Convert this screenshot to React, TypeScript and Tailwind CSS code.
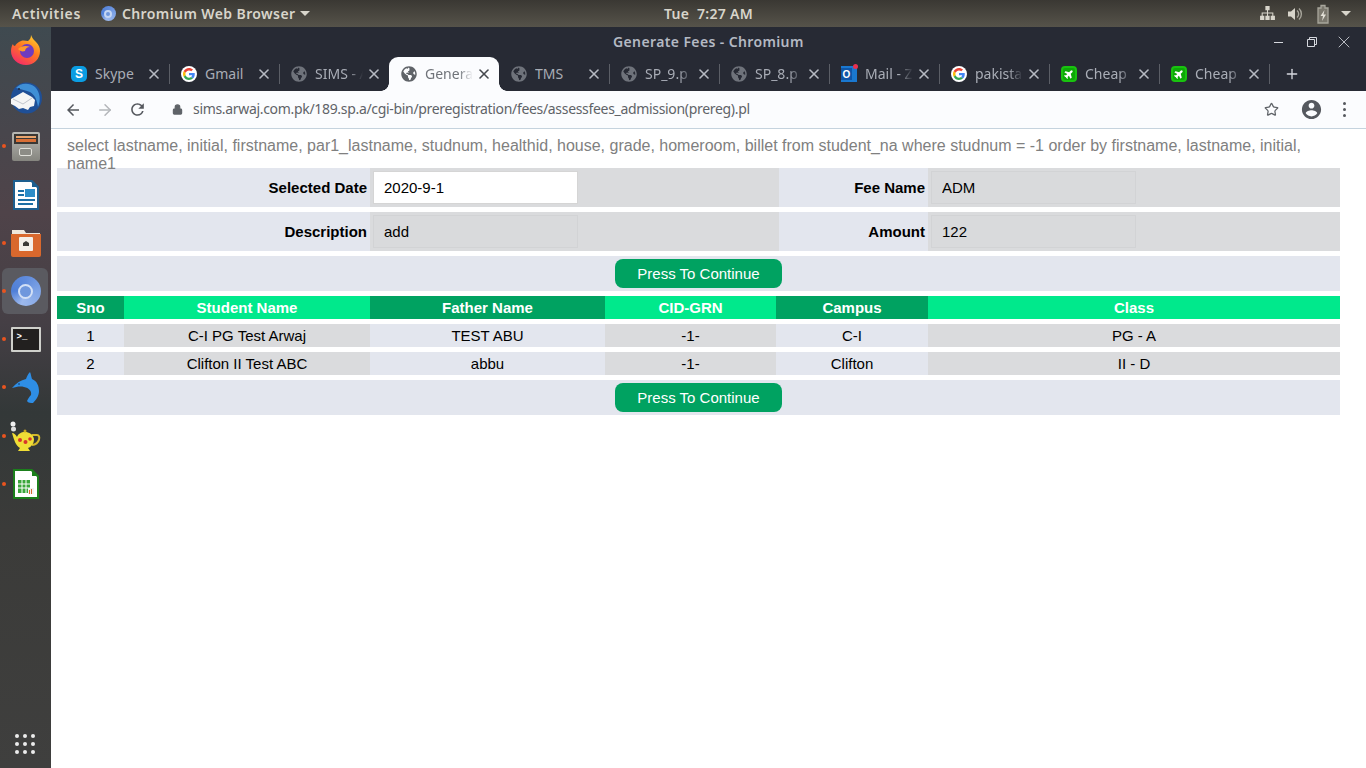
import { ArrowRight, Lock, Plus, Star, X } from "lucide-react";
import type { ReactNode } from "react";
import { FaGlobeAmericas, FaPlane } from "react-icons/fa";

const uiFont = "font-['Noto_Sans',sans-serif]";

function GoogleIcon() {
  return (
    <span className="flex h-4 w-4 items-center justify-center rounded-full bg-white">
      <svg viewBox="0 0 48 48" className="h-3 w-3">
        <path fill="#EA4335" d="M24 9.5c3.5 0 6.700 1.200 9.200 3.600l6.900-6.900C35.900 2.400 30.500 0 24 0 14.600 0 6.500 5.400 2.600 13.200l8 6.200C12.500 13.600 17.800 9.500 24 9.500z" />
        <path fill="#4285F4" d="M47 24.500c0-1.600-.1-3.100-.4-4.500H24v9h12.900c-.6 3-2.200 5.500-4.700 7.200l7.700 6c4.500-4.200 7.100-10.300 7.100-17.700z" />
        <path fill="#FBBC05" d="M10.500 28.600c-.5-1.500-.8-3-.8-4.600s.3-3.100.8-4.600l-8-6.200C.9 16.500 0 20.100 0 24s.9 7.500 2.600 10.800l7.900-6.200z" />
        <path fill="#34A853" d="M24 48c6.500 0 11.900-2.100 15.900-5.800l-7.700-6c-2.200 1.400-4.900 2.300-8.200 2.300-6.200 0-11.500-4.100-13.400-9.900l-8 6.200C6.500 42.600 14.600 48 24 48z" />
      </svg>
    </span>
  );
}

function SkypeIcon() {
  return (
    <span className="flex h-4 w-4 items-center justify-center rounded-[5px] bg-[#0b9de3] font-['Liberation_Sans',sans-serif] text-[12px] font-bold text-white">
      S
    </span>
  );
}

function GlobeIcon({ active }: { active?: boolean }) {
  return <FaGlobeAmericas className={active ? "h-4 w-4 text-[#5f6368]" : "h-4 w-4 text-[#6f737b]"} />;
}

function OutlookIcon() {
  return (
    <span className="relative flex h-4 w-4 items-center bg-[#1a78d0]">
      <span className="flex h-3 w-[11px] items-center justify-center bg-[#0f56a8] font-['Liberation_Sans',sans-serif] text-[10px] font-bold text-white">
        O
      </span>
      <span className="absolute -right-px -top-[2px] h-[5px] w-[5px] rounded-full bg-[#e8314f]" />
    </span>
  );
}

function PlaneIcon() {
  return (
    <span className="flex h-4 w-4 items-center justify-center rounded-[4px] border-2 border-[#19c20f] bg-[#0ca806]">
      <FaPlane className="h-[10px] w-[10px] -rotate-45 text-white" />
    </span>
  );
}

const tabs: { title: string; icon: ReactNode; active?: boolean; fade?: boolean; noLine?: boolean }[] = [
  { title: "Skype", icon: <SkypeIcon /> },
  { title: "Gmail", icon: <GoogleIcon /> },
  { title: "SIMS - A", icon: <GlobeIcon />, fade: true, noLine: true },
  { title: "Genera", icon: <GlobeIcon active />, active: true, fade: true, noLine: true },
  { title: "TMS", icon: <GlobeIcon /> },
  { title: "SP_9.p", icon: <GlobeIcon />, fade: true },
  { title: "SP_8.p", icon: <GlobeIcon />, fade: true },
  { title: "Mail - Z", icon: <OutlookIcon />, fade: true },
  { title: "pakista", icon: <GoogleIcon />, fade: true },
  { title: "Cheap", icon: <PlaneIcon />, fade: true },
  { title: "Cheap", icon: <PlaneIcon />, fade: true },
];

function TabItem({ title, icon, active, fade, noLine }: { title: string; icon: ReactNode; active?: boolean; fade?: boolean; noLine?: boolean }) {
  return (
    <div
      className={
        active
          ? "relative flex h-[34px] w-[110px] shrink-0 items-center rounded-t-[9px] bg-[#fbfcfe] pl-3"
          : "relative flex h-[34px] w-[110px] shrink-0 items-center pl-3"
      }
    >
      {active && <span className="absolute -left-2 bottom-0 h-2 w-2 bg-[radial-gradient(circle_at_0_0,transparent_7.5px,#fbfcfe_8px)]" />}
      {active && <span className="absolute -right-2 bottom-0 h-2 w-2 bg-[radial-gradient(circle_at_100%_0,transparent_7.5px,#fbfcfe_8px)]" />}
      <span className="flex h-4 w-4 shrink-0 items-center justify-center">{icon}</span>
      <span
        className={
          (active ? "text-[#70747a] " : "text-[#a9adb6] ") +
          "mb-[2px] ml-2 w-[48px] overflow-hidden whitespace-nowrap text-[14px] " +
          (fade ? "[mask-image:linear-gradient(to_right,black_70%,transparent_100%)]" : "")
        }
      >
        {title}
      </span>
      <X className={active ? "ml-[3px] h-4 w-4 text-[#45484e]" : "ml-[3px] h-4 w-4 text-[#b6bac2]"} strokeWidth={2.4} />
      {!noLine && <span className="absolute -right-px top-[7px] h-5 w-px bg-[#5b5e66]" />}
    </div>
  );
}

function ChromiumBall({ size }: { size: "sm" | "lg" }) {
  return (
    <span
      className={
        size === "sm"
          ? "flex h-[15px] w-[15px] items-center justify-center rounded-full bg-[conic-gradient(#5f8bdc_0deg,#7fa4e6_90deg,#9db9ec_200deg,#4f7fd8_270deg,#5f8bdc_360deg)]"
          : "flex h-[30px] w-[30px] items-center justify-center rounded-full bg-[conic-gradient(#5f8bdc_0deg,#7fa4e6_90deg,#9db9ec_200deg,#4f7fd8_270deg,#5f8bdc_360deg)]"
      }
    >
      <span
        className={
          size === "sm"
            ? "h-[8px] w-[8px] rounded-full border-2 border-[#c4d6f3] bg-[#6f97dd]"
            : "h-[15px] w-[15px] rounded-full border-2 border-[#d3e0f6] bg-[#6f97dd]"
        }
      />
    </span>
  );
}

function TopBar() {
  return (
    <div className={uiFont + " flex h-[27px] shrink-0 items-center justify-between bg-[linear-gradient(to_bottom,#3a3833,#56534a)] text-[14px] font-semibold text-[#d8d5cb]"}>
      <div className="flex flex-1 items-center">
        <span className="ml-3 tracking-[0.65px]">Activities</span>
        <span className="ml-[20px] flex">
          <ChromiumBall size="sm" />
        </span>
        <span className="ml-[6px] tracking-[0.4px]">Chromium Web Browser</span>
        <span className="ml-[4px] h-0 w-0 border-x-[5px] border-t-[5px] border-x-transparent border-t-[#d8d5cb]" />
      </div>
      <span className="whitespace-pre pl-[66px] tracking-[0.3px]">Tue  7:27 AM</span>
      <div className="flex flex-1 items-center justify-end pr-[15px]">
        <svg viewBox="0 0 16 16" className="h-[17px] w-[17px] fill-[#d8d5cb]">
          <path d="M6 1h4v4H8.500v2H13.500v3H15v4h-4v-4h1.500V8h-4v2H10v4H6v-4h1.500V8h-4v2H5v4H1v-4h1.500V7H7.500V5H6z" />
        </svg>
        <svg viewBox="0 0 16 16" className="ml-[11px] h-4 w-4">
          <path d="M1 5.500h3L8 2v12l-4-3.500H1z" fill="#d8d5cb" />
          <path d="M10 4.500a4.500 4.500 0 0 1 0 7M12 2.500a7.500 7.500 0 0 1 0 11" fill="none" stroke="#a8a69c" strokeWidth="1.400" />
        </svg>
        <svg viewBox="0 0 16 20" className="ml-[12px] h-[20px] w-4">
          <path d="M3 4h3V1.500h4V4h3v15H3z" fill="#7b786e" stroke="#a8a69c" strokeWidth="1.300" />
          <path d="M9.500 6 5.500 12h2.500L7 17l4-6.500H8.500z" fill="#e4e1d8" />
        </svg>
        <span className="ml-[10px] h-0 w-0 border-x-[5px] border-t-[5px] border-x-transparent border-t-[#d8d5cb]" />
      </div>
    </div>
  );
}

function Firefox() {
  return (
    <svg viewBox="0 0 32 32" className="h-8 w-8">
      <defs>
        <linearGradient id="ff" x1="0.8" y1="0" x2="0.2" y2="1">
          <stop offset="0" stopColor="#ffcf2e" />
          <stop offset="0.45" stopColor="#ff7a1f" />
          <stop offset="1" stopColor="#f5256e" />
        </linearGradient>
      </defs>
      <path d="M21 1c1 3 3 5 5 7 3 3 4 6 4 9 0 8-6 14-14 14S1 25 1 17c0-3 1-6 2-7 0 1 1 2 2 2 1-2 3-4 6-5 3-1 5 0 7 0 2-2 3-3 3-6z" fill="url(#ff)" />
      <circle cx="17" cy="17" r="7" fill="#6e3bc0" />
      <path d="M8 15c3-3 8-4 12-2-3 0-5 2-5 4-3 1-5 0-7-2z" fill="#ff9a2a" />
    </svg>
  );
}

function Thunderbird() {
  return (
    <svg viewBox="0 0 32 32" className="h-8 w-8">
      <circle cx="16.500" cy="16" r="15.500" fill="#1f4f96" />
      <path d="M6 6c4-5 13-6 19-1 5 5 6 13 3 20-1-7-3-12-8-15-5-2-10-3-14-4z" fill="#3f8fd6" />
      <path d="M1 17 13 10l9 5 3 3-1 6-4 1-2 3-5-2-4 1-4-3-4-2z" fill="#f5f5f5" />
      <path d="M3 17l10 5 9-6" fill="none" stroke="#c2c5cc" strokeWidth="1" />
      <circle cx="9" cy="7" r="1" fill="#1b2a44" />
    </svg>
  );
}

function FileCabinet() {
  return (
    <span className="flex h-[29px] w-[28px] flex-col rounded-[2px] bg-[linear-gradient(to_bottom,#b9b9b4,#85857f)] px-[2px] pt-[2px]">
      <span className="flex h-[10px] flex-col justify-start gap-px bg-[#3a3835] px-[2px] pt-[2px]">
        <span className="h-[2px] bg-[#e9a56e]" />
        <span className="h-[3px] bg-[#d96f36]" />
      </span>
      <span className="mx-auto mt-[4px] h-[8px] w-[13px] rounded-[2px] border border-[#e0e0da] bg-[#8c8c86]" />
    </span>
  );
}

function Writer() {
  return (
    <svg viewBox="0 0 28 32" className="h-8 w-7">
      <path d="M1 1h19l7 7v23H1z" fill="#1d5f8f" />
      <path d="M3 3h16l6 6v20H3z" fill="#fff" />
      <path d="M20 1l7 7h-7z" fill="#1d5f8f" />
      <path d="M6 11h6v2H6zM6 15h6v2H6zM6 20h17v2H6zM6 24h15v2H6z" fill="#1d6fa5" />
      <path d="M13 10h10v8H13z" fill="#2d8dc8" />
    </svg>
  );
}

function Folder() {
  return (
    <svg viewBox="0 0 30 28" className="h-[28px] w-[30px]">
      <path d="M1 1h12l2 3h14v4H1z" fill="#efe7dc" />
      <path d="M0 5h30v21a2 2 0 0 1-2 2H2a2 2 0 0 1-2-2z" fill="#d9682d" />
      <rect x="8" y="8" width="14" height="14" rx="1" fill="#f4efe8" />
      <path d="M12 17v-3l3-2 3 2v3z" fill="#3c3a36" />
    </svg>
  );
}

function Terminal() {
  return (
    <span className="flex h-[25px] w-[30px] flex-col rounded-[1px] border-2 border-[#cfd0cb] bg-[#22201f] pl-[4px] pt-[3px] font-['Liberation_Mono',monospace] text-[9px] font-bold leading-[10px] text-white">
      &gt;_
    </span>
  );
}

function Dolphin() {
  return (
    <svg viewBox="0 0 28 32" className="h-8 w-7">
      <path d="M0 17C4 12 9 9 14 8c1-3 2-5 4-7 1 2 1 4 2 7 5 2 7 7 7 12s-3 9-6 12c-2 0-5 0-6-2 1-2 2-4 4-6 1-4-2-7-7-8-4-1-8 0-12 1z" fill="#2e8ee6" />
      <circle cx="7" cy="13" r="0.800" fill="#11365e" />
    </svg>
  );
}

function Teapot() {
  return (
    <svg viewBox="0 0 32 32" className="h-8 w-8">
      <circle cx="3" cy="4" r="2.500" fill="#f0f0f0" />
      <circle cx="3.500" cy="9" r="2.500" fill="#dedede" />
      <path d="M22 15h5c4 0 3 9-5 10" fill="none" stroke="#d4b82a" strokeWidth="2" />
      <path d="M2 13c2 0 4 2 5 4 1-3 4-5 8-5s8 2 9 7c0 5-3 8-6 9l2 3H8l2-3c-4-2-6-8-8-15z" fill="#f0de36" />
      <circle cx="10" cy="20" r="2" fill="#d8342b" />
      <circle cx="15.500" cy="22" r="2" fill="#d8342b" />
      <circle cx="20" cy="19" r="1.800" fill="#d8342b" />
      <circle cx="15" cy="11" r="1.500" fill="#c9a81f" />
    </svg>
  );
}

function Calc() {
  return (
    <svg viewBox="0 0 28 32" className="h-8 w-7">
      <path d="M1 1h19l7 7v23H1z" fill="#1b7f1b" />
      <path d="M3 3h16l6 6v20H3z" fill="#fff" />
      <path d="M20 1l7 7h-7z" fill="#1b7f1b" />
      <path d="M6 12h12v13H6z" fill="#3aa63a" />
      <path d="M6 16h12M6 20h12M10 12v13M14 12v13" stroke="#fff" strokeWidth="1" />
      <path d="M16 20h6v6h-6z" fill="#f2f2f2" />
      <path d="M17 22h1v4h-1zM19 21h1v5h-1z" fill="#d9682d" />
    </svg>
  );
}

const dockItems: { icon: ReactNode; running?: boolean; active?: boolean }[] = [
  { icon: <Firefox /> },
  { icon: <Thunderbird /> },
  { icon: <FileCabinet />, running: true },
  { icon: <Writer /> },
  { icon: <Folder />, running: true },
  { icon: <ChromiumBall size="lg" />, running: true, active: true },
  { icon: <Terminal />, running: true },
  { icon: <Dolphin />, running: true },
  { icon: <Teapot />, running: true },
  { icon: <Calc />, running: true },
];

function Dock() {
  return (
    <aside className="flex w-[51px] shrink-0 flex-col justify-between bg-[linear-gradient(to_bottom,#3f4a50_0%,#4f4349_25%,#453f45_40%,#333838_52%,#3b3b39_68%,#3f3f3e_100%)]">
      <div className="-mt-px flex flex-col">
        {dockItems.map((item, i) => (
          <div key={i} className="relative flex h-[48.2px] items-center justify-center">
            {item.active && <span className="absolute left-[2px] top-px h-[46px] w-[46px] rounded-[6px] bg-[#5a5a60]" />}
            {item.running && <span className="absolute left-[2px] top-[22px] h-[4px] w-[4px] rounded-full bg-[#e9541f]" />}
            <span className="relative flex items-center justify-center">{item.icon}</span>
          </div>
        ))}
      </div>
      <div className="mb-[14px] ml-[15px] grid w-[20px] grid-cols-3 gap-[4px]">
        {Array.from({ length: 9 }).map((_, i) => (
          <span key={i} className="h-[4px] w-[4px] rounded-full bg-[#ececec]" />
        ))}
      </div>
    </aside>
  );
}

function BrowserChrome() {
  return (
    <>
      <div className={uiFont + " flex h-[64px] shrink-0 flex-col bg-[#272a34]"}>
        <div className="flex h-[30px] items-center">
          <span className="mb-[2px] ml-[562px] w-[190px] whitespace-nowrap text-center text-[14px] font-semibold tracking-[0.38px] text-[#b4b9c3]">Generate Fees - Chromium</span>
          <div className="ml-auto flex items-center pr-[12px] text-[#d6d8de]">
            <span className="h-px w-[9px] bg-[#d6d8de]" />
            <svg viewBox="0 0 10 10" className="ml-[24px] h-[10px] w-[10px] fill-none stroke-[#d6d8de]">
              <path d="M.5 2.500h7v7h-7zM2.500 2.500v-2h7v7h-2" />
            </svg>
            <X className="ml-[17px] h-5 w-5" strokeWidth={1} />
          </div>
        </div>
        <div className="flex h-[34px] pl-2">
          {tabs.map((tab, i) => (
            <TabItem key={i} title={tab.title} icon={tab.icon} active={tab.active} fade={tab.fade} noLine={tab.noLine} />
          ))}
          <Plus className="ml-[15px] mt-[9px] h-4 w-4 text-[#d6d8de]" strokeWidth={2} />
        </div>
      </div>
      <div className={uiFont + " flex h-[38px] shrink-0 items-center border-b border-[#c5d3de] bg-[#fbfcfe] pl-[13px] pr-[20px]"}>
        <svg viewBox="0 0 24 24" className="h-[18px] w-[18px] fill-[#55585e]">
          <path d="M20 11H7.830l5.590-5.590L12 4l-8 8 8 8 1.410-1.410L7.830 13H20v-2z" />
        </svg>
        <ArrowRight className="ml-[14px] h-[18px] w-[18px] text-[#b4b6ba]" strokeWidth={2} />
        <svg viewBox="0 0 24 24" className="ml-[14px] h-[19px] w-[19px] fill-[#55585e]">
          <path d="M17.650 6.350A7.958 7.958 0 0 0 12 4c-4.420 0-7.990 3.580-7.990 8s3.570 8 7.990 8c3.730 0 6.840-2.550 7.730-6h-2.080A5.990 5.990 0 0 1 12 18c-3.310 0-6-2.690-6-6s2.690-6 6-6c1.660 0 3.140.69 4.220 1.780L13 11h7V4l-2.350 2.350z" />
        </svg>
        <Lock className="ml-[25px] h-[11px] w-[11px] fill-[#5f6368] text-[#5f6368]" strokeWidth={2.5} />
        <span className="mb-[2px] ml-[10px] text-[14px] tracking-[-0.32px] text-[#5f6368]">sims.arwaj.com.pk/189.sp.a/cgi-bin/preregistration/fees/assessfees_admission(prereg).pl</span>
        <Star className="ml-auto h-[15px] w-[15px] text-[#5f6368]" strokeWidth={2} />
        <svg viewBox="0 0 24 24" className="ml-[21px] h-[23px] w-[23px] fill-[#55585e]">
          <path d="M12 2C6.480 2 2 6.480 2 12s4.480 10 10 10 10-4.480 10-10S17.520 2 12 2zm0 3c1.660 0 3 1.340 3 3s-1.340 3-3 3-3-1.340-3-3 1.340-3 3-3zm0 14.200c-2.500 0-4.710-1.280-6-3.220.03-1.990 4-3.080 6-3.080 1.990 0 5.970 1.090 6 3.080-1.290 1.940-3.500 3.220-6 3.220z" />
        </svg>
        <span className="ml-[20px] flex flex-col gap-[3px]">
          <span className="h-[3px] w-[3px] rounded-full bg-[#55585e]" />
          <span className="h-[3px] w-[3px] rounded-full bg-[#55585e]" />
          <span className="h-[3px] w-[3px] rounded-full bg-[#55585e]" />
        </span>
      </div>
    </>
  );
}

function FormRow({ leftLabel, leftValue, rightLabel, rightValue, editable }: { leftLabel: string; leftValue: string; rightLabel: string; rightValue: string; editable?: boolean }) {
  return (
    <div className="grid h-[39px] grid-cols-[313px_409px_149px_412px]">
      <div className="flex items-center justify-end bg-[#e3e6ee] pr-[3px] pt-[2px] font-bold">{leftLabel}</div>
      <div className="flex items-center bg-[#dadbdd] pl-[3px]">
        <input
          readOnly
          value={leftValue}
          className={
            editable
              ? "h-[33px] w-[205px] border border-[#d5d5d5] bg-white pl-[10px] text-[15px] text-black outline-none"
              : "h-[33px] w-[205px] border border-[#d2d3d5] bg-[#d9dadc] pl-[10px] text-[15px] text-black outline-none"
          }
        />
      </div>
      <div className="flex items-center justify-end bg-[#e3e6ee] pr-[3px] pt-[2px] font-bold">{rightLabel}</div>
      <div className="flex items-center bg-[#dadbdd] pl-[3px]">
        <input
          readOnly
          value={rightValue}
          className="h-[33px] w-[205px] border border-[#d2d3d5] bg-[#d9dadc] pl-[10px] text-[15px] text-black outline-none"
        />
      </div>
    </div>
  );
}

function ContinueRow() {
  return (
    <div className="flex h-[35px] items-center justify-center bg-[#e3e6ee]">
      <button type="button" className="h-[29px] w-[167px] rounded-[8px] bg-[#00a261] pt-[2px] text-[15px] text-white">
        Press To Continue
      </button>
    </div>
  );
}

const students = [
  { sno: "1", name: "C-I PG Test Arwaj", father: "TEST ABU", cid: "-1-", campus: "C-I", cls: "PG - A" },
  { sno: "2", name: "Clifton II Test ABC", father: "abbu", cid: "-1-", campus: "Clifton", cls: "II - D" },
];

const studentCols = "grid h-[23px] grid-cols-[67px_246px_235px_171px_152px_412px] items-stretch text-center leading-[23px]";

function FeesPage() {
  return (
    <main className="flex-1 bg-white pl-[6px] font-['Liberation_Sans',Arial,sans-serif] text-[15px] text-black">
      <p className="relative z-10 h-[39px] w-[1283px] pl-[10px] pt-[8px] text-[16px] leading-[18px] text-[#808080]">
        select lastname, initial, firstname, par1_lastname, studnum, healthid, house, grade, homeroom, billet from student_na where studnum = -1 order by firstname, lastname, initial, name1
      </p>
      <div className="flex w-[1283px] flex-col gap-[5px]">
        <FormRow leftLabel="Selected Date" leftValue="2020-9-1" rightLabel="Fee Name" rightValue="ADM" editable />
        <FormRow leftLabel="Description" leftValue="add" rightLabel="Amount" rightValue="122" />
        <ContinueRow />
        <div className={studentCols + " font-bold text-white"}>
          <div className="bg-[#00a261]">Sno</div>
          <div className="bg-[#00e98c]">Student Name</div>
          <div className="bg-[#00a261]">Father Name</div>
          <div className="bg-[#00e98c]">CID-GRN</div>
          <div className="bg-[#00a261]">Campus</div>
          <div className="bg-[#00e98c]">Class</div>
        </div>
        {students.map((s) => (
          <div key={s.sno} className={studentCols}>
            <div className="bg-[#e3e6ee]">{s.sno}</div>
            <div className="bg-[#dadbdd]">{s.name}</div>
            <div className="bg-[#e3e6ee]">{s.father}</div>
            <div className="bg-[#dadbdd]">{s.cid}</div>
            <div className="bg-[#e3e6ee]">{s.campus}</div>
            <div className="bg-[#dadbdd]">{s.cls}</div>
          </div>
        ))}
        <ContinueRow />
      </div>
    </main>
  );
}

export default function App() {
  return (
    <div className="flex h-screen w-full flex-col overflow-hidden">
      <TopBar />
      <div className="flex min-h-0 flex-1">
        <Dock />
        <div className="flex min-w-0 flex-1 flex-col">
          <BrowserChrome />
          <FeesPage />
        </div>
      </div>
    </div>
  );
}
